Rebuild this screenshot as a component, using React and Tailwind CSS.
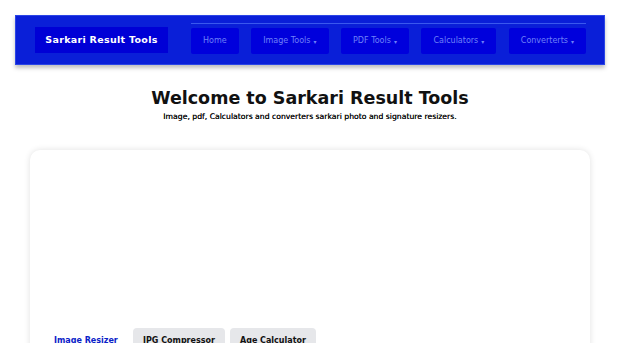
import React from 'react';

const navItems = [
  { label: 'Home', caret: false },
  { label: 'Image Tools', caret: true },
  { label: 'PDF Tools', caret: true },
  { label: 'Calculators', caret: true },
  { label: 'Converterts', caret: true },
];

const tabs = ['Image Resizer', 'JPG Compressor', 'Age Calculator'];

export default function App() {
  return (
    <div className="min-h-screen bg-white font-['DejaVu_Sans',Verdana,sans-serif]">
      {/* Navbar */}
      <div className="px-[15px] pt-[15px]">
        <nav className="flex items-start h-[50px] bg-[#0a1fd8] border border-[#2a45e6] shadow-[0_3px_4px_rgba(0,0,0,0.25)] pl-[19px] pr-[18px]">
          <div className="mt-[11px] h-[26px] w-[133px] bg-[#0000d6] flex items-center justify-center text-white text-[9.5px] font-bold tracking-[0.3px] whitespace-nowrap">
            Sarkari Result Tools
          </div>
          <ul className="ml-[23px] mt-[7px] flex-1 flex justify-between border-t border-[#3a58ee] pt-[4px]">
            {navItems.map((item) => (
              <li
                key={item.label}
                className="h-[26px] px-[12px] bg-[#0000dc] rounded-[2px] flex items-center text-[8px] text-[#6f80f8] whitespace-nowrap"
              >
                {item.label}
                {item.caret && <span className="ml-[3px] text-[6px]">▾</span>}
              </li>
            ))}
          </ul>
        </nav>
      </div>

      {/* Heading */}
      <div className="text-center mt-[21px]">
        <h1 className="text-[17.5px] font-bold text-[#111] leading-[24px]">
          Welcome to Sarkari Result Tools
        </h1>
        <p className="text-[7.7px] text-[#111] mt-[1px] leading-[12px] [text-shadow:0_0_0.3px_#111]">
          Image, pdf, Calculators and converters sarkari photo and signature resizers.
        </p>
      </div>

      {/* Card */}
      <div className="mx-[30px] mt-[27px] h-[220px] bg-white rounded-[10px] shadow-[0_0_6px_rgba(0,0,0,0.12)] px-[24px] pt-[178px]">
        <div className="flex items-end gap-[5px]">
          <div className="h-[26px] w-[74px] flex items-center text-[8px] font-bold text-[#0a22c8] whitespace-nowrap">
            {tabs[0]}
          </div>
          {tabs.slice(1).map((t) => (
            <div
              key={t}
              className="h-[26px] px-[10px] bg-[#e6e7ea] rounded-t-[4px] flex items-center text-[8px] font-bold text-[#111] whitespace-nowrap"
            >
              {t}
            </div>
          ))}
        </div>
      </div>
    </div>
  );
}
